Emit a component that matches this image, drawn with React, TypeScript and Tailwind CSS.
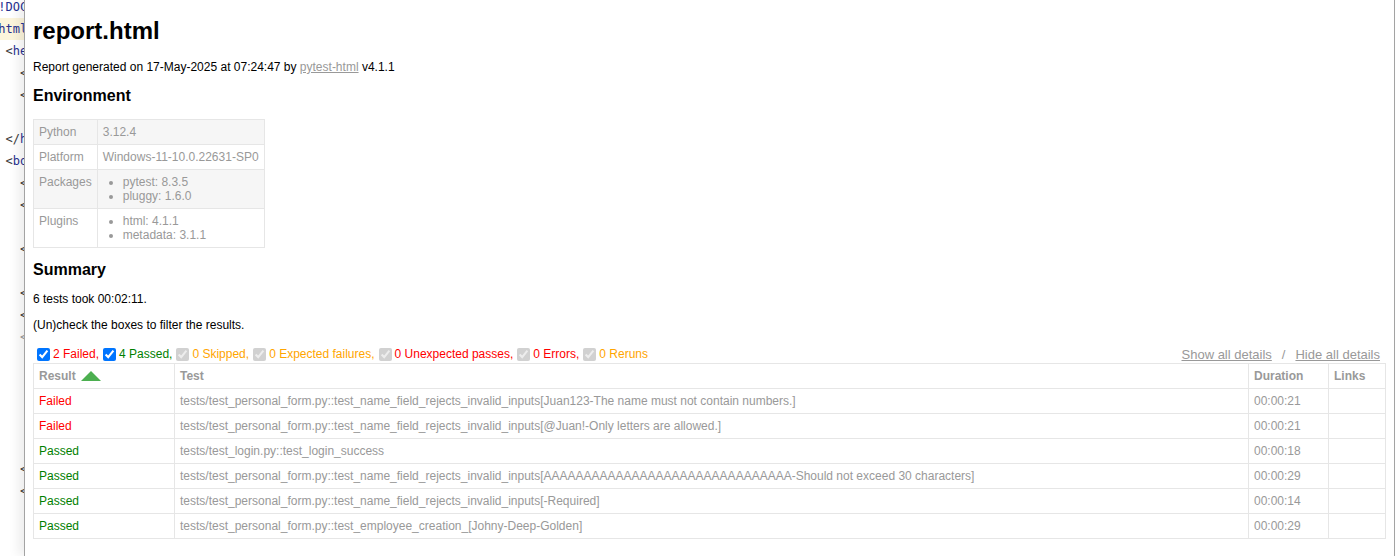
const font = { fontFamily: '"Liberation Sans", Arial, Helvetica, sans-serif' };

type CodeLine = { indent: number; open?: string; tag?: string; hl?: boolean; faded?: boolean };

const codeLines: CodeLine[] = [
  { indent: 0, open: "<", tag: "!DOCTYPE html>" },
  { indent: 0, open: "<", tag: "html lang=\"en\">", hl: true },
  { indent: 2, open: "<", tag: "head>" },
  { indent: 4, open: "<", tag: "meta" },
  { indent: 4, open: "<", tag: "title>" },
  { indent: 0 },
  { indent: 2, open: "</", tag: "head>" },
  { indent: 2, open: "<", tag: "body>" },
  { indent: 4, open: "<", tag: "h1>" },
  { indent: 4, open: "<", tag: "p>" },
  { indent: 0 },
  { indent: 4, open: "<", tag: "h2>" },
  { indent: 0 },
  { indent: 4, open: "<", tag: "p>" },
  { indent: 4, open: "<", tag: "p>" },
  { indent: 4, open: "<", tag: "div", faded: true },
  { indent: 0 },
  { indent: 0 },
  { indent: 0 },
  { indent: 0 },
  { indent: 0 },
  { indent: 4, open: "<", tag: "div" },
  { indent: 4, open: "<", tag: "table" },
  { indent: 0 },
  { indent: 0 },
];

const environment = [
  { key: "Python", value: "3.12.4" },
  { key: "Platform", value: "Windows-11-10.0.22631-SP0" },
  { key: "Packages", list: ["pytest: 8.3.5", "pluggy: 1.6.0"] },
  { key: "Plugins", list: ["html: 4.1.1", "metadata: 3.1.1"] },
];

const filters = [
  { label: "2 Failed,", color: "text-[#ff0000]", enabled: true },
  { label: "4 Passed,", color: "text-[#008000]", enabled: true },
  { label: "0 Skipped,", color: "text-[#ffa500]", enabled: false },
  { label: "0 Expected failures,", color: "text-[#ffa500]", enabled: false },
  { label: "0 Unexpected passes,", color: "text-[#ff0000]", enabled: false },
  { label: "0 Errors,", color: "text-[#ff0000]", enabled: false },
  { label: "0 Reruns", color: "text-[#ffa500]", enabled: false },
];

const results = [
  { result: "Failed", test: "tests/test_personal_form.py::test_name_field_rejects_invalid_inputs[Juan123-The name must not contain numbers.]", duration: "00:00:21" },
  { result: "Failed", test: "tests/test_personal_form.py::test_name_field_rejects_invalid_inputs[@Juan!-Only letters are allowed.]", duration: "00:00:21" },
  { result: "Passed", test: "tests/test_login.py::test_login_success", duration: "00:00:18" },
  { result: "Passed", test: "tests/test_personal_form.py::test_name_field_rejects_invalid_inputs[AAAAAAAAAAAAAAAAAAAAAAAAAAAAAAA-Should not exceed 30 characters]", duration: "00:00:29" },
  { result: "Passed", test: "tests/test_personal_form.py::test_name_field_rejects_invalid_inputs[-Required]", duration: "00:00:14" },
  { result: "Passed", test: "tests/test_personal_form.py::test_employee_creation_[Johny-Deep-Golden]", duration: "00:00:29" },
];

function EditorStrip() {
  return (
    <div className="relative w-[24px] shrink-0 overflow-hidden bg-white">
      <div
        className="-mt-[4px] text-[12px]"
        style={{ fontFamily: '"DejaVu Sans Mono", "Liberation Mono", monospace' }}
      >
        {codeLines.map((line, i) => (
          <div
            key={i}
            className={`h-[22px] leading-[22px] whitespace-pre -ml-[9px] ${line.hl ? "bg-[#fcf5dc]" : ""}`}
          >
            {" ".repeat(line.indent)}
            {line.open && <span className={line.faded ? "text-[#9a9a9a]" : "text-[#3a3a3a]"}>{line.open}</span>}
            {line.tag && <span className={line.faded ? "text-[#9aa0c8]" : "text-[#26308f]"}>{line.tag}</span>}
          </div>
        ))}
      </div>
    </div>
  );
}

function Checkbox({ enabled }: { enabled: boolean }) {
  return (
    <input
      type="checkbox"
      defaultChecked
      disabled={!enabled}
      className="m-0 ml-[4px] mr-[3px] h-[13px] w-[13px] shrink-0"
    />
  );
}

export default function App() {
  return (
    <div className="flex h-[556px] w-[1396px] overflow-hidden bg-white" style={font}>
      <EditorStrip />
      <div className="relative z-10 mr-[1px] flex-1 border-x border-[#a3a3a3] bg-white px-[8px] shadow-[-6px_0_10px_rgba(0,0,0,0.07)]">
        <h1 className="mt-[17px] text-[24px] leading-[28px] font-bold text-black">report.html</h1>
        <p className="mt-[15px] text-[12px] leading-[14px] text-black">
          Report generated on 17-May-2025 at 07:24:47 by{" "}
          <a className="text-[#999] underline">pytest-html</a> v4.1.1
        </p>
        <h2 className="mt-[13px] text-[16px] leading-[18px] font-bold text-black">Environment</h2>

        <table className="mt-[14px] border-collapse text-[12px] leading-[14px] text-[#999]">
          <tbody>
            {environment.map((row, i) => (
              <tr key={row.key} className={i % 2 === 0 ? "bg-[#f6f6f6]" : ""}>
                <td className="border border-[#e6e6e6] p-[5px] align-top">{row.key}</td>
                <td className="border border-[#e6e6e6] p-[5px] align-top">
                  {row.value}
                  {row.list && (
                    <ul className="list-disc px-[20px]">
                      {row.list.map((item) => (
                        <li key={item}>{item}</li>
                      ))}
                    </ul>
                  )}
                </td>
              </tr>
            ))}
          </tbody>
        </table>

        <h2 className="mt-[13px] text-[16px] leading-[18px] font-bold text-black">Summary</h2>
        <p className="mt-[13px] text-[12px] leading-[14px] text-black">6 tests took 00:02:11.</p>
        <p className="mt-[12px] text-[12px] leading-[14px] text-black">(Un)check the boxes to filter the results.</p>

        <div className="mt-[14px] flex h-[16px] items-center justify-between text-[12px] leading-[14px]">
          <div className="flex items-center">
            {filters.map((f) => (
              <div key={f.label} className="flex items-center">
                <Checkbox enabled={f.enabled} />
                <span className={f.color}>{f.label}</span>
              </div>
            ))}
          </div>
          <div className="flex pr-[6px] text-[13px] leading-[15px] text-[#999]">
            <span className="underline">Show all details</span>
            <span className="px-[10px]">/</span>
            <span className="underline">Hide all details</span>
          </div>
        </div>

        <table className="mt-[1px] w-full table-fixed border-collapse border border-[#e6e6e6] text-[12px] leading-[14px] text-[#999]">
          <colgroup>
            <col className="w-[141px]" />
            <col />
            <col className="w-[80px]" />
            <col className="w-[57px]" />
          </colgroup>
          <thead>
            <tr>
              <th className="border border-[#e6e6e6] p-[5px] text-left font-bold">
                Result
                <span className="relative top-[-1px] ml-[5px] inline-block border-x-[10px] border-b-[10px] border-x-transparent border-b-[#4caf50] align-middle"></span>
              </th>
              <th className="border border-[#e6e6e6] p-[5px] text-left font-bold">Test</th>
              <th className="border border-[#e6e6e6] p-[5px] text-left font-bold">Duration</th>
              <th className="border border-[#e6e6e6] p-[5px] text-left font-bold">Links</th>
            </tr>
          </thead>
          <tbody>
            {results.map((r, i) => (
              <tr key={i}>
                <td className={`border border-[#e6e6e6] p-[5px] ${r.result === "Failed" ? "text-[#ff0000]" : "text-[#008000]"}`}>
                  {r.result}
                </td>
                <td className="truncate border border-[#e6e6e6] p-[5px]">{r.test}</td>
                <td className="border border-[#e6e6e6] p-[5px]">{r.duration}</td>
                <td className="border border-[#e6e6e6] p-[5px]"></td>
              </tr>
            ))}
          </tbody>
        </table>
      </div>
    </div>
  );
}
